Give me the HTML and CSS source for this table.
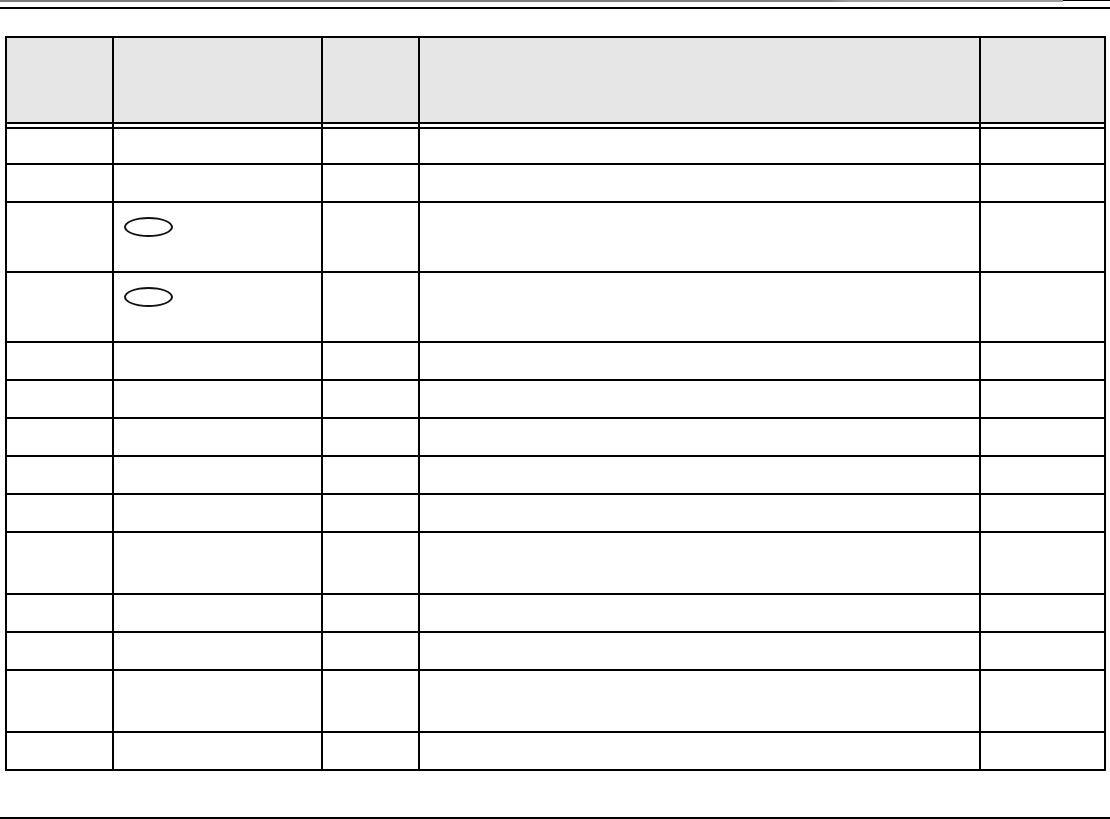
FILE: index.html
```html
<!DOCTYPE html>
<html lang="en">
<head>
<meta charset="utf-8">
<title>Table</title>
<link rel="stylesheet" href="styles.css">
</head>
<body>
<div class="topbar"><div class="topbar-grey"></div><div class="topbar-black"></div></div>
<div class="rule-top"></div>
<div class="sheet">
  <div class="grid">
    <div class="c h"></div><div class="c h"></div><div class="c h"></div><div class="c h"></div><div class="c h"></div>
    <div class="c"></div><div class="c"></div><div class="c"></div><div class="c"></div><div class="c"></div>
    <div class="c"></div><div class="c"></div><div class="c"></div><div class="c"></div><div class="c"></div>
    <div class="c"></div><div class="c"></div><div class="c"></div><div class="c"></div><div class="c"></div>
    <div class="c"></div><div class="c"><span class="oval"></span></div><div class="c"></div><div class="c"></div><div class="c"></div>
    <div class="c"></div><div class="c"><span class="oval"></span></div><div class="c"></div><div class="c"></div><div class="c"></div>
    <div class="c"></div><div class="c"></div><div class="c"></div><div class="c"></div><div class="c"></div>
    <div class="c"></div><div class="c"></div><div class="c"></div><div class="c"></div><div class="c"></div>
    <div class="c"></div><div class="c"></div><div class="c"></div><div class="c"></div><div class="c"></div>
    <div class="c"></div><div class="c"></div><div class="c"></div><div class="c"></div><div class="c"></div>
    <div class="c"></div><div class="c"></div><div class="c"></div><div class="c"></div><div class="c"></div>
    <div class="c"></div><div class="c"></div><div class="c"></div><div class="c"></div><div class="c"></div>
    <div class="c"></div><div class="c"></div><div class="c"></div><div class="c"></div><div class="c"></div>
    <div class="c"></div><div class="c"></div><div class="c"></div><div class="c"></div><div class="c"></div>
    <div class="c"></div><div class="c"></div><div class="c"></div><div class="c"></div><div class="c"></div>
    <div class="c"></div><div class="c"></div><div class="c"></div><div class="c"></div><div class="c"></div>
  </div>
</div>
<div class="rule-bottom"></div>
</body>
</html>
```

FILE: styles.css
```css
html, body {
  margin: 0;
  padding: 0;
  background: #ffffff;
  font-family: "Liberation Sans", Arial, sans-serif;
}
body {
  width: 1110px;
  height: 819px;
  overflow: hidden;
  display: flex;
  flex-direction: column;
}
.topbar {
  display: flex;
  height: 2px;
}
.topbar-grey {
  width: 1063px;
  height: 2px;
  background: linear-gradient(90deg, #7a7a7a 0%, #808080 78%, #a0a0a0 80%, #9a9a9a 100%);
}
.topbar-black {
  flex: 1;
  height: 1px;
  background: #000;
}
.rule-top {
  margin-top: 5px;
  height: 2px;
  background: #000;
}
.sheet {
  padding: 27px 0 0 5px;
}
.grid {
  width: 1097px;
  display: grid;
  grid-template-columns: 105px 207px 95px 559px 123px;
  grid-template-rows: 84px 3px 34px 36px 68px 68px 36px 36px 36px 36px 36px 60px 36px 36px 60px 36px;
  gap: 2px;
  padding: 2px;
  background: #000;
}
.c {
  background: #fff;
  position: relative;
}
.c.h {
  background: #e6e6e6;
}
.oval {
  position: absolute;
  left: 10px;
  top: 14px;
  width: 45px;
  height: 16px;
  border: 2px solid #111;
  border-radius: 50%;
}
.rule-bottom {
  margin-top: auto;
  height: 2px;
  background: #000;
}
```
